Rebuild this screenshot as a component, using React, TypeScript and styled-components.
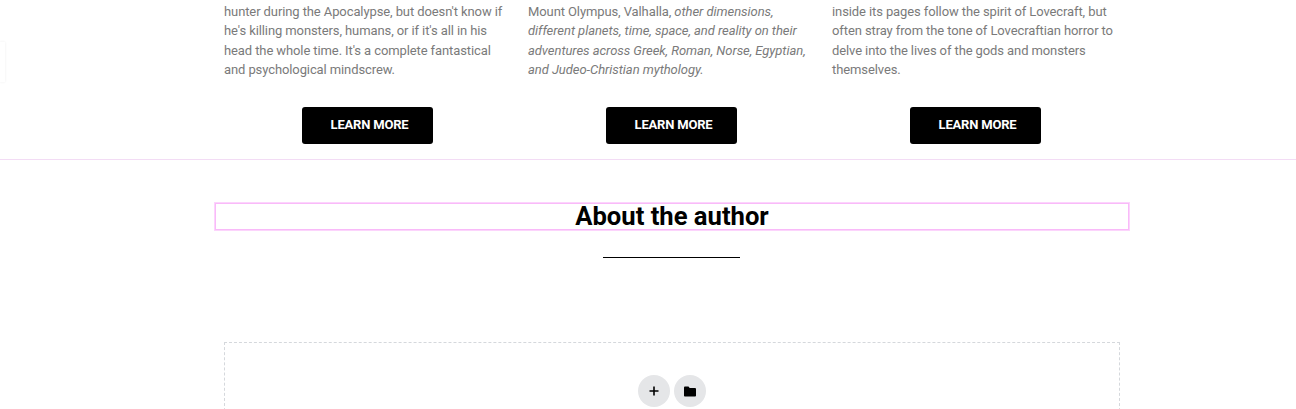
import styled, { createGlobalStyle } from 'styled-components';

const GlobalStyle = createGlobalStyle`
  html,
  body {
    margin: 0;
    padding: 0;
    background: #fff;
  }

  body {
    height: 409px;
    overflow: hidden;
    font-family: Roboto, "Liberation Sans", sans-serif;
  }
`;

// has to sit above books, the JSX in there runs at load time
const StyledEmphasis = styled.em`
  letter-spacing: -0.05px;
`;

const books = [
  {
    id: 'hunter',
    lines: (
      <>
        hunter during the Apocalypse, but doesn't know if he's killing monsters, humans, or if it's all in his head the
        whole time. It's a complete fantastical and psychological mindscrew.
      </>
    ),
  },
  {
    id: 'olympus',
    lines: (
      <>
        Mount Olympus, Valhalla,{' '}
        <StyledEmphasis>
          other dimensions, different planets, time, space, and reality on their adventures across Greek, Roman, Norse,
          Egyptian, and Judeo-Christian mythology.
        </StyledEmphasis>
      </>
    ),
  },
  {
    id: 'lovecraft',
    lines: (
      <>
        inside its pages follow the spirit of Lovecraft, but often stray from the tone of Lovecraftian horror to delve
        into the lives of the gods and monsters themselves.
      </>
    ),
  },
];

const App = () => {
  return (
    <>
      <GlobalStyle />
      <StyledPage>
        <StyledSideHint />
        <StyledBooksSection>
          <StyledBooksRow>
            {books.map((book) => (
              <StyledBook key={book.id}>
                <StyledBlurb>{book.lines}</StyledBlurb>
                <StyledLearnMore href="#">LEARN MORE</StyledLearnMore>
              </StyledBook>
            ))}
          </StyledBooksRow>
        </StyledBooksSection>

        <StyledAuthorSection>
          <StyledHeadingBox>
            <StyledHeading>About the author</StyledHeading>
          </StyledHeadingBox>
          <StyledDivider />
          <StyledDropZone>
            <StyledRoundButton type="button" aria-label="Add section">
              <svg width="12" height="12" viewBox="0 0 12 12" aria-hidden="true">
                <path d="M6 1.5v9M1.5 6h9" stroke="#000" strokeWidth="1.6" fill="none" />
              </svg>
            </StyledRoundButton>
            <StyledRoundButton type="button" aria-label="Add template">
              <svg width="12" height="11" viewBox="0 0 12 11" aria-hidden="true">
                <path
                  d="M1.1 0.5h3.4l1.2 1.5h5.2c.6 0 1.1.5 1.1 1.1v6.3c0 .6-.5 1.1-1.1 1.1H1.1C.5 10.5 0 10 0 9.400V1.600C0 1 .5.500 1.100.500z"
                  fill="#000"
                />
              </svg>
            </StyledRoundButton>
          </StyledDropZone>
        </StyledAuthorSection>
      </StyledPage>
    </>
  );
};

export default App;

const StyledPage = styled.div`
  position: relative;

  width: 1296px;
  height: 409px;

  overflow: hidden;
`;

const StyledSideHint = styled.div`
  position: absolute;
  top: 42px;
  left: 0;

  width: 5px;
  height: 40px;

  box-shadow: 0 0 3px rgba(0, 0, 0, 0.07);
`;

const StyledBooksSection = styled.section`
  height: 159px;

  border-bottom: 1px solid #f3dcf5;
`;

const StyledBooksRow = styled.div`
  display: grid;
  grid-template-columns: repeat(3, 304px);

  width: 912px;
  margin-left: 214px;
`;

const StyledBook = styled.article`
  display: flex;
  flex-direction: column;
  align-items: center;

  padding: 2px 8px 0 10px;
`;

const StyledBlurb = styled.p`
  width: 100%;
  margin: 0 0 28px;

  color: #7a7a7a;
  font-size: 13px;
  letter-spacing: -0.1px;
  line-height: 19.33px;
`;

const StyledLearnMore = styled.a`
  display: flex;
  justify-content: center;
  align-items: center;

  box-sizing: border-box;
  width: 131px;
  height: 37px;
  padding-bottom: 3px;
  padding-left: 5px;

  border-radius: 3px;

  background: #000;

  color: #fff;
  font-size: 13px;
  font-weight: 700;
  letter-spacing: -0.2px;
  line-height: 1;
  text-decoration: none;
`;

const StyledAuthorSection = styled.section`
  display: flex;
  flex-direction: column;
  align-items: center;

  width: 916px;
  margin-left: 214px;
  padding-top: 42px;
`;

const StyledHeadingBox = styled.div`
  box-sizing: border-box;
  width: 100%;
  height: 29px;

  border: 1px solid #fcd4fc;
  box-shadow: inset 0 0 0 1px #f9baf9;
`;

const StyledHeading = styled.h2`
  margin: 1px 0 0;

  color: #000;
  font-size: 25.6px;
  font-weight: 700;
  line-height: 24px;
  text-align: center;
`;

const StyledDivider = styled.div`
  width: 137px;
  height: 1px;
  margin-top: 26px;
  margin-left: -1px;

  background: #000;
`;

const StyledDropZone = styled.div`
  display: flex;
  justify-content: center;
  gap: 4px;

  box-sizing: border-box;
  width: 896px;
  height: 120px;
  margin-top: 84px;
  padding-top: 32px;

  border: 1px dashed #d5d8dc;
`;

const StyledRoundButton = styled.button`
  display: flex;
  justify-content: center;
  align-items: center;

  width: 32px;
  height: 32px;
  padding: 0;

  border: none;
  border-radius: 50%;

  background: #e5e6e8;
`;
